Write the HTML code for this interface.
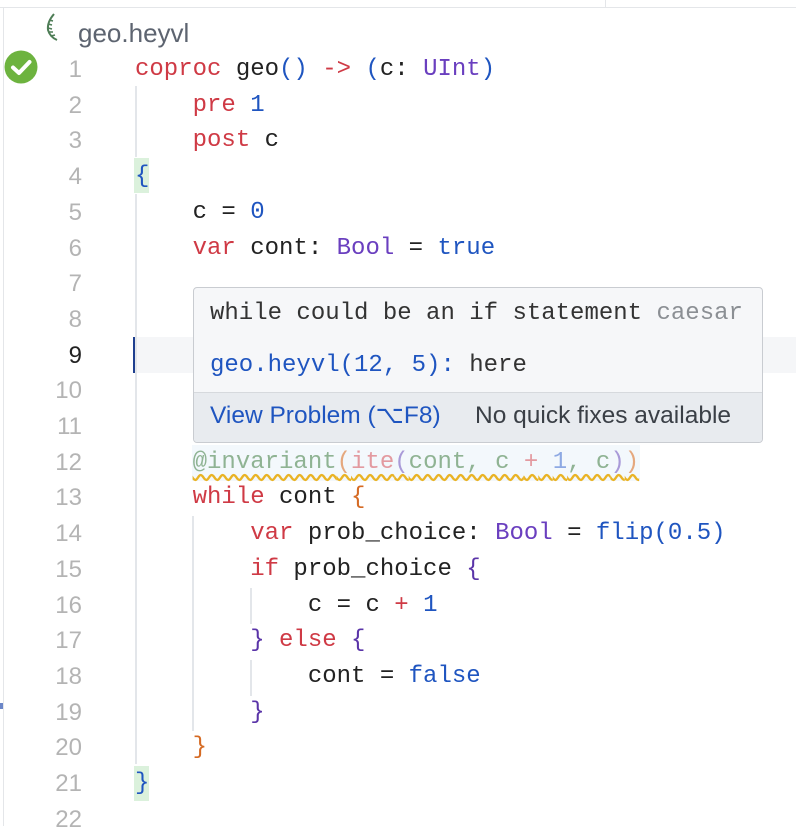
<!DOCTYPE html>
<html><head><meta charset="utf-8"><style>
*{margin:0;padding:0;box-sizing:border-box}
body{width:796px;height:826px;background:#fff;position:relative;overflow:hidden;font-family:"Liberation Mono",monospace}
.ln{position:absolute;left:20px;width:62px;text-align:right;font-family:"Liberation Sans",sans-serif;font-size:24px;color:#b4b4b4;height:36px;line-height:36px;margin-top:3px}
.c{position:absolute;left:135px;font-size:24px;height:36px;line-height:36px;white-space:pre;color:#222;margin-top:3px}
.k{color:#cf3a45}.b{color:#1f55c0}.p{color:#6a3fbf}.o{color:#d56a23}.pu{color:#5a34a8}
.g{position:absolute;width:2px;background:#e3e6ea}
</style></head><body>
<div style="position:absolute;left:0;top:0;width:796px;height:8px;border-bottom:1px solid #e4e6e9"></div>
<div style="position:absolute;left:3px;top:8px;width:1px;height:818px;background:#e4e6e9"></div>
<div style="position:absolute;left:605px;top:0;width:1px;height:8px;background:#e4e6e9"></div>
<svg style="position:absolute;left:44px;top:12px" width="22" height="30" viewBox="0 0 22 30"><path d="M10 2 Q3 10 4 18 Q6 25 13 28" stroke="#4e7d56" stroke-width="2" fill="none"/><path d="M5 8 l4 1 M4 12 l4 1 M4 16 l4 1 M5 20 l4 0 M7 24 l4 -1" stroke="#4e7d56" stroke-width="1.5"/></svg>
<div style="position:absolute;left:78px;top:18px;font-family:'Liberation Sans',sans-serif;font-size:26px;color:#5d6470">geo.heyvl</div>
<svg style="position:absolute;left:4px;top:50px" width="34" height="34"><circle cx="17" cy="17" r="16.5" fill="#6db33f"/><path d="M9 17.5 L15 23 L25.5 12" stroke="#fff" stroke-width="4" fill="none" stroke-linecap="round" stroke-linejoin="round"/></svg>
<div style="position:absolute;left:136px;top:337px;width:660px;height:36px;background:#f5f6f8"></div>
<div style="position:absolute;left:133px;top:337px;width:3px;height:36px;background:#1f3f8f"></div>
<div class="g" style="left:135px;top:86px;height:71px"></div>
<div class="g" style="left:135px;top:194px;height:570px"></div>
<div class="g" style="left:192px;top:516px;height:215px"></div>
<div class="g" style="left:250px;top:588px;height:36px"></div>
<div class="g" style="left:250px;top:660px;height:36px"></div>
<div style="position:absolute;left:134px;top:158px;width:15px;height:35px;background:#dbf1dc"></div>
<div style="position:absolute;left:134px;top:766px;width:15px;height:35px;background:#dbf1dc"></div>
<div style="position:absolute;left:192px;top:445px;width:448px;height:36px;background:#f3f8fc"></div>

<div class="ln" style="top:49px">1</div><div class="c" style="top:49px"><span class="k">coproc</span> geo<span class="b">()</span> <span class="k">-&gt;</span> <span class="b">(</span>c: <span class="p">UInt</span><span class="b">)</span></div>
<div class="ln" style="top:84.7px">2</div><div class="c" style="top:84.7px">    <span class="k">pre</span> <span class="b">1</span></div>
<div class="ln" style="top:120.4px">3</div><div class="c" style="top:120.4px">    <span class="k">post</span> c</div>
<div class="ln" style="top:156.1px">4</div><div class="c" style="top:156.1px"><span class="b">{</span></div>
<div class="ln" style="top:191.8px">5</div><div class="c" style="top:191.8px">    c = <span class="b">0</span></div>
<div class="ln" style="top:227.5px">6</div><div class="c" style="top:227.5px">    <span class="k">var</span> cont: <span class="p">Bool</span> = <span class="b">true</span></div>
<div class="ln" style="top:263.2px">7</div>
<div class="ln" style="top:298.9px">8</div>
<div class="ln" style="top:334.6px;color:#222">9</div>
<div class="ln" style="top:370.3px">10</div>
<div class="ln" style="top:406px">11</div>
<div class="ln" style="top:441.7px">12</div><div class="c" style="top:441.7px;color:#8a8f94">    <span style="color:#8fb393;text-decoration:underline wavy #e9b325;text-underline-offset:6px">@invariant<span style="color:#e5a87e">(</span><span style="color:#e39aa0">ite</span><span style="color:#a99ad8">(</span>cont, c <span style="color:#e39aa0">+</span> <span style="color:#8ea9e3">1</span>, c<span style="color:#a99ad8">)</span><span style="color:#e5a87e">)</span></span></div>
<div class="ln" style="top:477.4px">13</div><div class="c" style="top:477.4px">    <span class="k">while</span> cont <span class="o">{</span></div>
<div class="ln" style="top:513.1px">14</div><div class="c" style="top:513.1px">        <span class="k">var</span> prob_choice: <span class="p">Bool</span> = <span class="b">flip(0.5)</span></div>
<div class="ln" style="top:548.8px">15</div><div class="c" style="top:548.8px">        <span class="k">if</span> prob_choice <span class="pu">{</span></div>
<div class="ln" style="top:584.5px">16</div><div class="c" style="top:584.5px">            c = c <span class="k">+</span> <span class="b">1</span></div>
<div class="ln" style="top:620.2px">17</div><div class="c" style="top:620.2px">        <span class="pu">}</span> <span class="k">else</span> <span class="pu">{</span></div>
<div class="ln" style="top:655.9px">18</div><div class="c" style="top:655.9px">            cont = <span class="b">false</span></div>
<div class="ln" style="top:691.6px">19</div><div class="c" style="top:691.6px">        <span class="pu">}</span></div>
<div class="ln" style="top:727.3px">20</div><div class="c" style="top:727.3px">    <span class="o">}</span></div>
<div class="ln" style="top:763px">21</div><div class="c" style="top:763px"><span class="b">}</span></div>
<div class="ln" style="top:798.7px">22</div>

<div style="position:absolute;left:193px;top:287px;width:570px;height:156px;background:#f6f7f9;border:1.5px solid #c9ccd1;border-radius:4px;overflow:hidden">
 <div style="position:absolute;left:16px;top:11px;font-size:24px;line-height:30px;color:#333;white-space:pre">while could be an if statement <span style="color:#8b8f94">caesar</span></div>
 <div style="position:absolute;left:16px;top:63px;font-size:24px;line-height:30px;color:#1f55c0;white-space:pre">geo.heyvl(12, 5): <span style="color:#333">here</span></div>
 <div style="position:absolute;left:0;top:104px;width:100%;height:52px;background:#e8ebef;border-top:1px solid #d6d9dd"></div>
 <div style="position:absolute;left:16px;top:113px;font-family:'Liberation Sans',sans-serif;font-size:24.5px;line-height:30px;color:#1f55c0">View Problem (⌥F8)</div>
 <div style="position:absolute;left:281px;top:113px;font-family:'Liberation Sans',sans-serif;font-size:24.5px;line-height:30px;color:#3a3f46">No quick fixes available</div>
</div>
<div style="position:absolute;left:0;top:703px;width:3px;height:6px;background:#6b86c8"></div>
</body></html>
